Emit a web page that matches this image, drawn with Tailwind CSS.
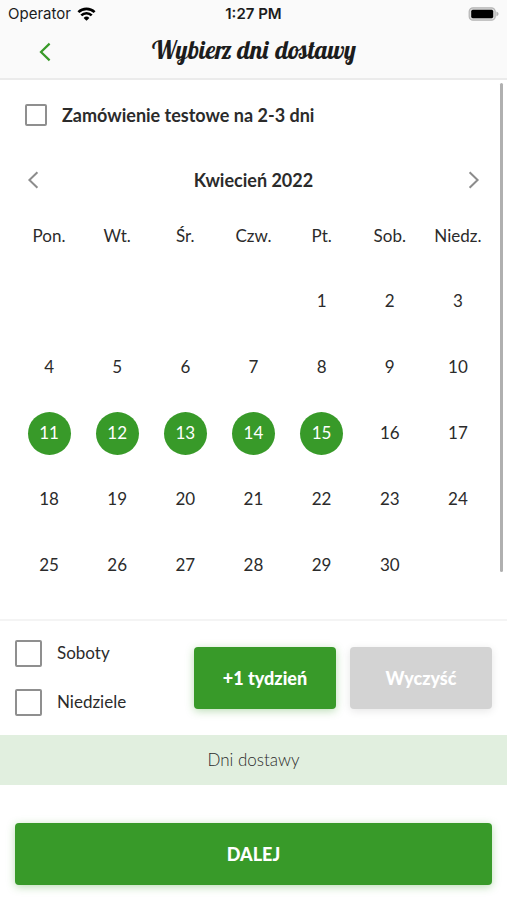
<!DOCTYPE html>
<html lang="pl">
<head>
<meta charset="utf-8">
<meta name="viewport" content="width=device-width, initial-scale=1">
<title>Wybierz dni dostawy</title>
<script src="https://cdn.jsdelivr.net/npm/@tailwindcss/browser@4"></script>
</head>
<body class="flex min-h-screen flex-col bg-white font-['Lato',sans-serif] text-[#2b2b2b]">
<header class="border-b-2 border-[#ebebeb] bg-[#fafafa]">
  <div class="grid h-7 grid-cols-3 items-center px-2 font-['Inter',sans-serif] text-[15px] text-[#1c1c1c]">
    <div class="flex items-center gap-[6px]">
      <span>Operator</span>
      <svg class="h-[14px] w-[19px]" viewBox="0 0 18 14" fill="none" stroke="#000" stroke-width="2.6" aria-hidden="true"><path d="M.9 5.2a11.5 11.5 0 0 1 16.2 0M3.8 8.4a7.4 7.4 0 0 1 10.4 0"/><path d="M9 13.8 6.1 10.9a4.1 4.1 0 0 1 5.8 0Z" fill="#000" stroke="none"/></svg>
    </div>
    <div class="text-center font-semibold">1:27 PM</div>
    <svg class="h-[14px] w-[31px] justify-self-start ml-auto" viewBox="0 0 31 14" aria-hidden="true"><rect x="1.2" y=".8" width="26" height="12.4" rx="3.8" fill="#d8d8d8" stroke="#b5b5b5" stroke-width="1.2"/><rect x="3.2" y="2.8" width="22" height="8.4" rx="1.6" fill="#000"/><path d="M28.4 4.6q2.2.9 2.2 2.4t-2.2 2.4Z" fill="#b5b5b5"/></svg>
  </div>
  <div class="grid h-[50px] grid-cols-[64px_1fr_64px] items-center pb-[2px]">
    <button type="button" aria-label="Wstecz" class="flex h-10 items-center justify-end pr-[13px]">
      <svg class="h-5 w-3" viewBox="0 0 12 20" fill="none" stroke="#389a29" stroke-width="2.2" aria-hidden="true"><path d="M10.6 1.6 2 10l8.6 8.4"/></svg>
    </button>
    <h1 class="pb-1 text-center font-['Lobster_Two','Lobster','Liberation_Serif',serif] text-[25px] leading-8 font-bold italic text-[#1c1c1c]">Wybierz dni dostawy</h1>
  </div>
</header>

<main class="relative flex-1 px-[15px] pb-[21px]">
  <label class="flex h-[69px] items-center gap-[15px] pl-[10px] text-lg font-bold">
    <input type="checkbox" class="size-[22px] appearance-none rounded-xs border-2 border-[#8f8f8f] checked:bg-[#389a29]">
    Zamówienie testowe na 2-3 dni
  </label>
  <div class="flex h-[62px] items-center justify-between px-[10px]">
    <button type="button" aria-label="Poprzedni miesiąc" class="flex h-10 w-4 items-center justify-center">
      <svg class="h-[18px] w-3" viewBox="0 0 12 18" fill="none" stroke="#8c8c8c" stroke-width="2" aria-hidden="true"><path d="M10.4 1.2 2.4 9l8 7.8"/></svg>
    </button>
    <h2 class="text-lg font-bold">Kwiecień 2022</h2>
    <button type="button" aria-label="Następny miesiąc" class="flex h-10 w-4 items-center justify-center">
      <svg class="h-[18px] w-3" viewBox="0 0 12 18" fill="none" stroke="#8c8c8c" stroke-width="2" aria-hidden="true"><path d="m1.6 1.2 8 7.8-8 7.8"/></svg>
    </button>
  </div>
  <table class="w-full table-fixed text-center text-[17px]">
    <thead>
      <tr class="h-[57px] align-top leading-[50px]">
        <th class="font-normal">Pon.</th><th class="font-normal">Wt.</th><th class="font-normal">Śr.</th><th class="font-normal">Czw.</th><th class="font-normal">Pt.</th><th class="font-normal">Sob.</th><th class="font-normal">Niedz.</th>
      </tr>
    </thead>
    <tbody id="days"></tbody>
  </table>
  <div class="absolute top-[3px] right-1 bottom-[47px] w-[3px] rounded-full bg-[#b0b0b0]"></div>
</main>

<footer>
  <div class="grid h-[116px] grid-cols-[165px_1fr_1fr] items-center gap-x-[14px] border-t-2 border-[#f4f4f4] px-[15px] text-lg">
    <div class="flex flex-col gap-[22px] text-[17px]">
      <label class="flex items-center gap-[15px]"><input type="checkbox" class="size-[27px] appearance-none rounded-xs border-2 border-[#8f8f8f] checked:bg-[#389a29]">Soboty</label>
      <label class="flex items-center gap-[15px]"><input type="checkbox" class="size-[27px] appearance-none rounded-xs border-2 border-[#8f8f8f] checked:bg-[#389a29]">Niedziele</label>
    </div>
    <button type="button" class="h-[62px] rounded bg-[#389a29] font-black text-white shadow-[0_2px_8px] shadow-[#389a29]/35">+1 tydzień</button>
    <button type="button" disabled class="h-[62px] rounded bg-[#d3d3d3] font-black text-white shadow-[0_2px_8px] shadow-black/10">Wyczyść</button>
  </div>
  <div class="flex h-[50px] items-center justify-center bg-[#e1efdf] text-[17px] font-light text-[#2b2b2b]">Dni dostawy</div>
  <div class="px-[15px] pt-[38px] pb-[15px]">
    <button type="button" class="h-[62px] w-full rounded bg-[#389a29] text-lg font-black text-white shadow-[0_2px_8px] shadow-[#389a29]/35">DALEJ</button>
  </div>
</footer>
<script>
  const body = document.getElementById('days');
  const offset = 4, count = 30;
  for (let week = 0; week < 5; week++) {
    const row = body.insertRow();
    row.className = 'h-[66px]';
    for (let col = 0; col < 7; col++) {
      const cell = row.insertCell();
      const day = week * 7 + col - offset + 1;
      if (day < 1 || day > count) continue;
      const button = document.createElement('button');
      button.type = 'button';
      button.textContent = day;
      const selected = day >= 11 && day <= 15;
      button.setAttribute('aria-pressed', selected);
      button.className = selected
        ? 'size-[43px] rounded-full bg-[#389a29] text-white align-middle'
        : 'size-[43px] rounded-full align-middle';
      cell.append(button);
    }
  }
</script>
</body>
</html>
